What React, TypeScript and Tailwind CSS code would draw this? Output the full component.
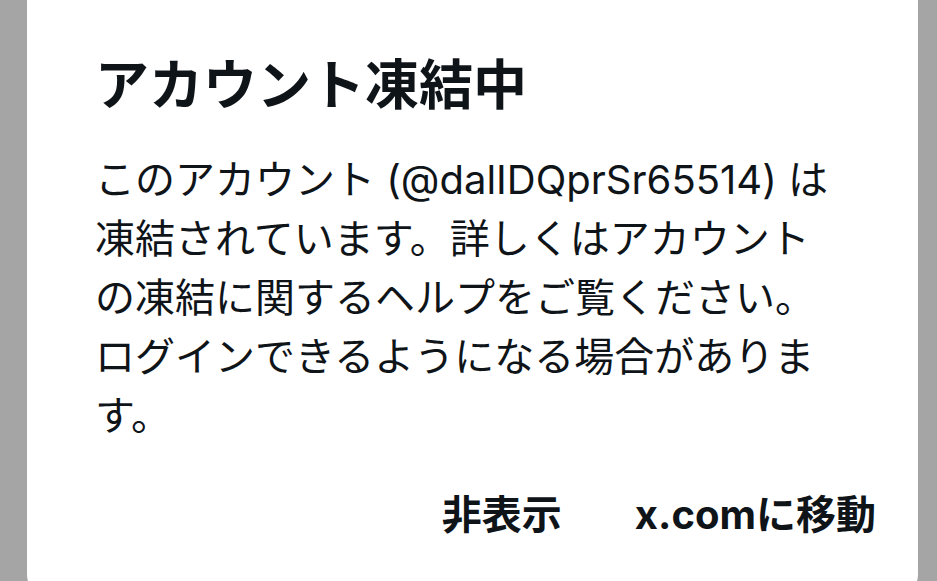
export default function App() {
  const font = {
    fontFamily: '"Inter", "Noto Sans CJK JP", sans-serif',
  };

  return (
    <div className="w-[937px] h-[581px] overflow-hidden bg-[#a5a5a5] flex pl-[27px]" style={font}>
      <div className="w-[891px] h-[600px] shrink-0 bg-white rounded-b-[26px] flex flex-col pl-[68px] pr-[42px] pt-[50px] text-[#0f1419]">
        <h1 className="text-[54px] leading-[72px] font-bold">アカウント凍結中</h1>
        <p className="mt-[28px] w-[745px] text-[40px] leading-[59px]">
          このアカウント (@dalIDQprSr65514) は凍結されています。詳しくはアカウントの凍結に関するヘルプをご覧ください。ログインできるようになる場合があります。
        </p>
        <div className="mt-[45px] flex justify-end gap-[73px] text-[40px] leading-[50px] font-bold">
          <button className="font-bold">非表示</button>
          <button className="font-bold">x.comに移動</button>
        </div>
      </div>
    </div>
  );
}
